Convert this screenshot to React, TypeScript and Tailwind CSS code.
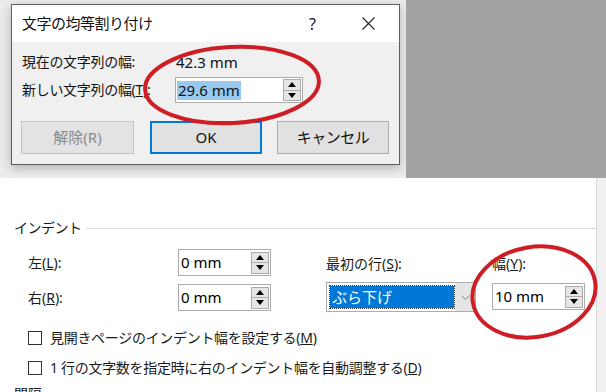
import React from "react";

const font = { fontFamily: "'Noto Sans', 'Noto Sans CJK JP', sans-serif" };

const Spin: React.FC<{ h?: string }> = ({ h = "h-[22px]" }) => (
  <div className={`flex flex-col w-[18px] ${h} mr-[1px]`}>
    <div className="flex-1 flex items-center justify-center bg-[#e6e6e6] border border-[#acacac]">
      <div className="w-0 h-0 border-l-[4px] border-r-[4px] border-b-[5px] border-l-transparent border-r-transparent border-b-black" />
    </div>
    <div className="flex-1 flex items-center justify-center bg-[#e6e6e6] border border-t-0 border-[#acacac]">
      <div className="w-0 h-0 border-l-[4px] border-r-[4px] border-t-[5px] border-l-transparent border-r-transparent border-t-black" />
    </div>
  </div>
);

const NumBox: React.FC<{ value: string; w: string }> = ({ value, w }) => (
  <div className={`flex items-center ${w} h-[27px] bg-white border border-[#acacac]`}>
    <span className="flex-1 pl-[2px] text-[15px] leading-none text-black">{value}</span>
    <Spin />
  </div>
);

const Check: React.FC<{ children: React.ReactNode }> = ({ children }) => (
  <div className="flex items-center h-[20px]">
    <div className="w-[14px] h-[14px] border border-[#333] bg-white" />
    <span className="ml-[8px] text-[14px] leading-[20px] text-[#1a1a1a] tracking-[-0.3px]">{children}</span>
  </div>
);

export default function App() {
  return (
    <div className="relative w-[606px] h-[392px] overflow-hidden bg-white" style={font}>
      {/* screenshot of the dialog */}
      <div className="flex h-[178px]">
        <div className="w-[406px] bg-[#ececec] pl-[11px] pt-[4px]">
          <div className="w-[389px] h-[161px] border border-[#5e5e5e] bg-[#f0f0f0] shadow-[0_3px_10px_rgba(0,0,0,0.25)] flex flex-col">
            <div className="h-[37px] bg-white flex items-center pl-[10px] pr-[24px]">
              <span className="text-[15px] text-[#111] leading-none tracking-[-0.5px]">文字の均等割り付け</span>
              <span className="ml-auto text-[16px] text-[#222] leading-none">?</span>
              <svg className="ml-[46px]" width="13" height="13" viewBox="0 0 13 13">
                <path d="M0.5 0.5L12.5 12.5M12.5 0.5L0.5 12.5" stroke="#222" strokeWidth="1.1" />
              </svg>
            </div>
            <div className="flex-1 px-[10px] pt-[10px] text-[14px] text-[#111]">
              <div className="flex items-center h-[20px]">
                <span className="w-[154px] leading-[20px] tracking-[-0.3px]">現在の文字列の幅:</span>
                <span className="text-[15px] leading-none">42.3 mm</span>
              </div>
              <div className="flex items-center mt-[5px]">
                <span className="w-[153px] leading-[20px] tracking-[-0.3px]">
                  新しい文字列の幅(<span className="underline">T</span>):
                </span>
                <div className="flex items-center w-[128px] h-[26px] bg-white border border-[#acacac]">
                  <span className="ml-[1px] bg-[#99c9ef] text-[15px] leading-[19px] px-[1px]">29.6 mm</span>
                  <div className="ml-auto">
                    <Spin />
                  </div>
                </div>
              </div>
              <div className="flex mt-[18px] text-[15px]">
                <div className="w-[113px] h-[33px] flex items-center justify-center bg-[#e3e3e3] border border-[#c3c3c3] text-[#8a8a8a] ml-[-1px]">
                  解除(R)
                </div>
                <div className="w-[112px] h-[33px] ml-[16px] flex items-center justify-center bg-[#e1e1e1] border-2 border-[#0078d7] text-[#111]">
                  OK
                </div>
                <div className="w-[112px] h-[33px] ml-[15px] flex items-center justify-center bg-[#e1e1e1] border border-[#adadad] text-[#111] tracking-[-0.5px]">
                  キャンセル
                </div>
              </div>
            </div>
          </div>
        </div>
        <div className="flex-1 bg-[#a3a3a3]" />
      </div>

      {/* paragraph settings */}
      <div className="flex h-[214px]">
        <div className="flex-1 pl-[14px] pt-[40px] text-[#1a1a1a]">
          <div className="flex items-center h-[20px]">
            <span className="text-[14px] leading-[20px] tracking-[-0.5px]">インデント</span>
            <div className="ml-[4px] flex-1 h-[1px] bg-[#dcdcdc] mr-[0px]" />
          </div>
          <div className="flex mt-[11px] pl-[14px]">
            <div className="flex flex-col gap-[8px]">
              <div className="flex items-center">
                <span className="w-[150px] text-[14px]">
                  左(<span className="underline">L</span>):
                </span>
                <NumBox value="0 mm" w="w-[93px]" />
              </div>
              <div className="flex items-center">
                <span className="w-[150px] text-[14px]">
                  右(<span className="underline">R</span>):
                </span>
                <NumBox value="0 mm" w="w-[93px]" />
              </div>
            </div>
            <div className="ml-[55px] flex flex-col">
              <span className="mt-[5px] text-[14px] leading-[20px]">
                最初の行(<span className="underline">S</span>):
              </span>
              <div className="mt-[8px] w-[150px] h-[30px] border border-[#acacac] bg-white flex">
                <div className="flex-1 m-[3px] mr-0 bg-[#0078d7] outline outline-1 outline-dotted outline-[#333] flex items-center">
                  <span className="text-white text-[15px] leading-none pl-[2px]">ぶら下げ</span>
                </div>
                <div className="w-[20px] bg-[#e5e5e5] flex items-center justify-center ml-[1px]">
                  <svg width="9" height="5" viewBox="0 0 9 5">
                    <path d="M0.5 0.5L4.5 4.5L8.5 0.5" stroke="#888" fill="none" />
                  </svg>
                </div>
              </div>
            </div>
            <div className="ml-[16px] flex flex-col">
              <span className="mt-[5px] text-[14px] leading-[20px]">
                幅(<span className="underline">Y</span>):
              </span>
              <div className="mt-[9px]">
                <NumBox value="10 mm" w="w-[93px]" />
              </div>
            </div>
          </div>
          <div className="pl-[14px] mt-[16px] flex flex-col gap-[10px]">
            <Check>
              見開きページのインデント幅を設定する(<span className="underline">M</span>)
            </Check>
            <Check>
              1 行の文字数を指定時に右のインデント幅を自動調整する(<span className="underline">D</span>)
            </Check>
          </div>
          <div className="mt-[6px] text-[14px] leading-[20px]">間隔</div>
        </div>
        <div className="w-[10px] bg-[#f0f0f0] border-l border-[#d9d9d9]" />
      </div>

      {/* hand-drawn red marks */}
      <svg className="absolute inset-0 pointer-events-none" width="606" height="392">
        <ellipse cx="232" cy="85" rx="87" ry="38" transform="rotate(-3 232 85)" fill="none" stroke="#cf1d25" strokeWidth="4" />
        <ellipse cx="534" cy="292" rx="62" ry="45" transform="rotate(-10 534 292)" fill="none" stroke="#cf1d25" strokeWidth="4" />
      </svg>
    </div>
  );
}
